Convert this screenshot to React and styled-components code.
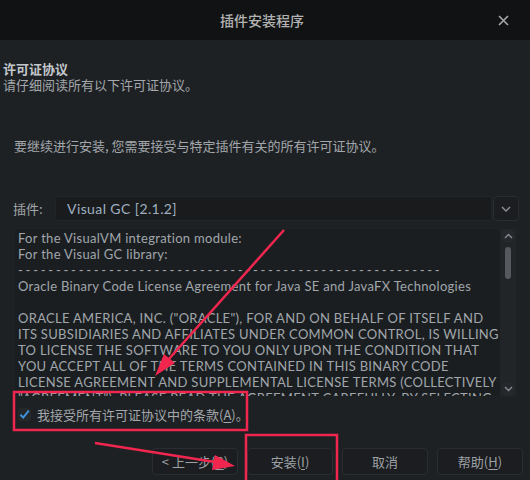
import React from "react";
import styled, { createGlobalStyle } from "styled-components";

const GlobalStyle = createGlobalStyle`
  html, body {
    margin: 0;
    padding: 0;
    background: #1e2124;
  }
  body {
    font-family: "Noto Sans CJK SC", "Noto Sans", sans-serif;
    color: #a3a7ab;
  }
`;

const licenseLines = [
  "For the VisualVM integration module:",
  "For the Visual GC library:",
  "-".repeat(56),
  "Oracle Binary Code License Agreement for Java SE and JavaFX Technologies",
  "",
  'ORACLE AMERICA, INC. ("ORACLE"), FOR AND ON BEHALF OF ITSELF AND',
  "ITS SUBSIDIARIES AND AFFILIATES UNDER COMMON CONTROL, IS WILLING",
  "TO LICENSE THE SOFTWARE TO YOU ONLY UPON THE CONDITION THAT",
  "YOU ACCEPT ALL OF THE TERMS CONTAINED IN THIS BINARY CODE",
  "LICENSE AGREEMENT AND SUPPLEMENTAL LICENSE TERMS (COLLECTIVELY",
  '"AGREEMENT"). PLEASE READ THE AGREEMENT CAREFULLY. BY SELECTING',
];

const App = () => {
  return (
    <Window>
      <GlobalStyle />
      <TitleBar>
        <span />
        <Title>插件安装程序</Title>
        <CloseButton>
          <svg width="11" height="11" viewBox="0 0 11 11">
            <path d="M1 1 L10 10 M10 1 L1 10" stroke="#a8a8a8" strokeWidth="1.6" />
          </svg>
        </CloseButton>
      </TitleBar>

      <Body>
        <Header>
          <Heading>许可证协议</Heading>
          <SubText>请仔细阅读所有以下许可证协议。</SubText>
        </Header>

        <Instruction>要继续进行安装, 您需要接受与特定插件有关的所有许可证协议。</Instruction>

        <ComboRow>
          <ComboLabel>插件:</ComboLabel>
          <ComboField>Visual GC [2.1.2]</ComboField>
          <ComboArrow>
            <svg width="10" height="6" viewBox="0 0 10 6">
              <path d="M1 1 L5 5 L9 1" fill="none" stroke="#8d9196" strokeWidth="1.4" />
            </svg>
          </ComboArrow>
        </ComboRow>

        <LicenseBox>
          <LicenseText>
            {licenseLines.map((line, i) => (
              <Line key={i} $dash={line.startsWith("---")}>
                {line || "\u00a0"}
              </Line>
            ))}
          </LicenseText>
          <ScrollBar>
            <ScrollButton>
              <svg width="9" height="6" viewBox="0 0 9 6">
                <path d="M1 5 L4.5 1.5 L8 5" fill="none" stroke="#8a8e92" strokeWidth="1.3" />
              </svg>
            </ScrollButton>
            <ScrollTrack>
              <ScrollThumb />
            </ScrollTrack>
            <ScrollButton>
              <svg width="9" height="6" viewBox="0 0 9 6">
                <path d="M1 1 L4.5 4.5 L8 1" fill="none" stroke="#8a8e92" strokeWidth="1.3" />
              </svg>
            </ScrollButton>
          </ScrollBar>
        </LicenseBox>

        <CheckRow>
          <CheckBox>
            <svg width="13" height="13" viewBox="0 0 13 13">
              <path d="M2.5 6.8 L5.2 9.6 L10.8 2.6" fill="none" stroke="#3d93dd" strokeWidth="2" />
            </svg>
          </CheckBox>
          <span>
            我接受所有许可证协议中的条款(<u>A</u>)。
          </span>
        </CheckRow>

        <ButtonRow>
          <Button>&lt; 上一步(<u>B</u>)</Button>
          <Button>安装(<u>I</u>)</Button>
          <Button>取消</Button>
          <Button>帮助(<u>H</u>)</Button>
        </ButtonRow>
      </Body>

      <Annotations width="530" height="480" viewBox="0 0 530 480">
        <g stroke="#f0264f" strokeWidth="2.5" fill="none">
          <rect x="14" y="392" width="233" height="38" />
          <rect x="246" y="435" width="91" height="50" />
          <line x1="284" y1="230" x2="168" y2="360" />
          <line x1="95" y1="443" x2="215" y2="462" />
        </g>
        <g fill="#f0264f">
          <polygon points="155,376 175,363 164,354" />
          <polygon points="235,466 212,470 215,455" />
        </g>
      </Annotations>
    </Window>
  );
};

const Window = styled.div`
  position: relative;
  width: 530px;
  height: 480px;
  overflow: hidden;
  display: flex;
  flex-direction: column;
  background: #1e2124;
`;

const TitleBar = styled.div`
  height: 40px;
  flex-shrink: 0;
  background: #111213;
  display: grid;
  grid-template-columns: 1fr auto 1fr;
  align-items: center;
`;

const Title = styled.div`
  font-size: 14px;
  font-weight: 500;
  color: #b2b2b2;
  padding-right: 6px;
`;

const CloseButton = styled.div`
  justify-self: end;
  margin-right: 21px;
  display: flex;
  align-items: center;
`;

const Body = styled.div`
  flex: 1;
  display: flex;
  flex-direction: column;
  font-size: 13px;
`;

const Header = styled.div`
  padding: 21px 3px 0;
  line-height: 16px;
`;

const Heading = styled.div`
  font-weight: 700;
  color: #c3c7cb;
`;

const SubText = styled.div`
  color: #a3a7ab;
`;

const Instruction = styled.div`
  margin: 45px 0 0 14px;
  line-height: 16px;
`;

const ComboRow = styled.div`
  margin-top: 42px;
  height: 25px;
  display: flex;
  align-items: stretch;
  padding-left: 13px;
`;

const ComboLabel = styled.div`
  width: 42px;
  display: flex;
  align-items: center;
`;

const ComboField = styled.div`
  width: 424px;
  padding-left: 11px;
  display: flex;
  align-items: center;
  background: #191b1d;
  border: 1px solid #222528;
  border-radius: 3px 0 0 3px;
  font-family: Lato, "Noto Sans", sans-serif;
  font-size: 14px;
  letter-spacing: 0.4px;
  color: #9fb0c0;
`;

const ComboArrow = styled.div`
  width: 24px;
  margin-left: 1px;
  display: flex;
  align-items: center;
  justify-content: center;
  background: #1b1d20;
  border: 1px solid #2a2d30;
  border-radius: 4px;
`;

const LicenseBox = styled.div`
  margin: 7px 13px 0 14px;
  height: 167px;
  display: flex;
  background: #1b1e21;
  border: 1px solid #1f2225;
`;

const LicenseText = styled.div`
  flex: 1;
  overflow: hidden;
  padding: 1px 0 0 3px;
  font-family: Lato, "Noto Sans", sans-serif;
  font-size: 13px;
  line-height: 16px;
  color: #a0a6ab;
`;

const Line = styled.div`
  white-space: pre;
  letter-spacing: ${(p) => (p.$dash ? "2.75px" : "0.3px")};
`;

const ScrollBar = styled.div`
  width: 16px;
  display: flex;
  flex-direction: column;
  align-items: center;
  background: #222528;
`;

const ScrollButton = styled.div`
  width: 14px;
  height: 14px;
  display: flex;
  align-items: center;
  justify-content: center;
  background: #26292c;
  border-radius: 50%;
`;

const ScrollTrack = styled.div`
  flex: 1;
  padding-top: 4px;
`;

const ScrollThumb = styled.div`
  width: 6px;
  height: 32px;
  border-radius: 3px;
  background: #56595d;
`;

const CheckRow = styled.div`
  margin: 9px 0 0 18px;
  height: 16px;
  display: flex;
  align-items: center;
  gap: 6px;
  color: #a3a7ab;
  u {
    text-underline-offset: 2px;
  }
`;

const CheckBox = styled.div`
  width: 13px;
  height: 13px;
  border-radius: 2px;
  background: #25282b;
  display: flex;
`;

const ButtonRow = styled.div`
  margin-top: 26px;
  padding-right: 7px;
  display: flex;
  justify-content: flex-end;
  gap: 9px;
`;

const Button = styled.div`
  width: 86px;
  height: 27px;
  box-sizing: border-box;
  display: flex;
  align-items: center;
  justify-content: center;
  background: #1b1d20;
  border: 1px solid #2a2d31;
  border-radius: 4px;
  color: #9da1a5;
  u {
    text-underline-offset: 2px;
  }
`;

const Annotations = styled.svg`
  position: absolute;
  top: 0;
  left: 0;
  pointer-events: none;
`;

export default App;
